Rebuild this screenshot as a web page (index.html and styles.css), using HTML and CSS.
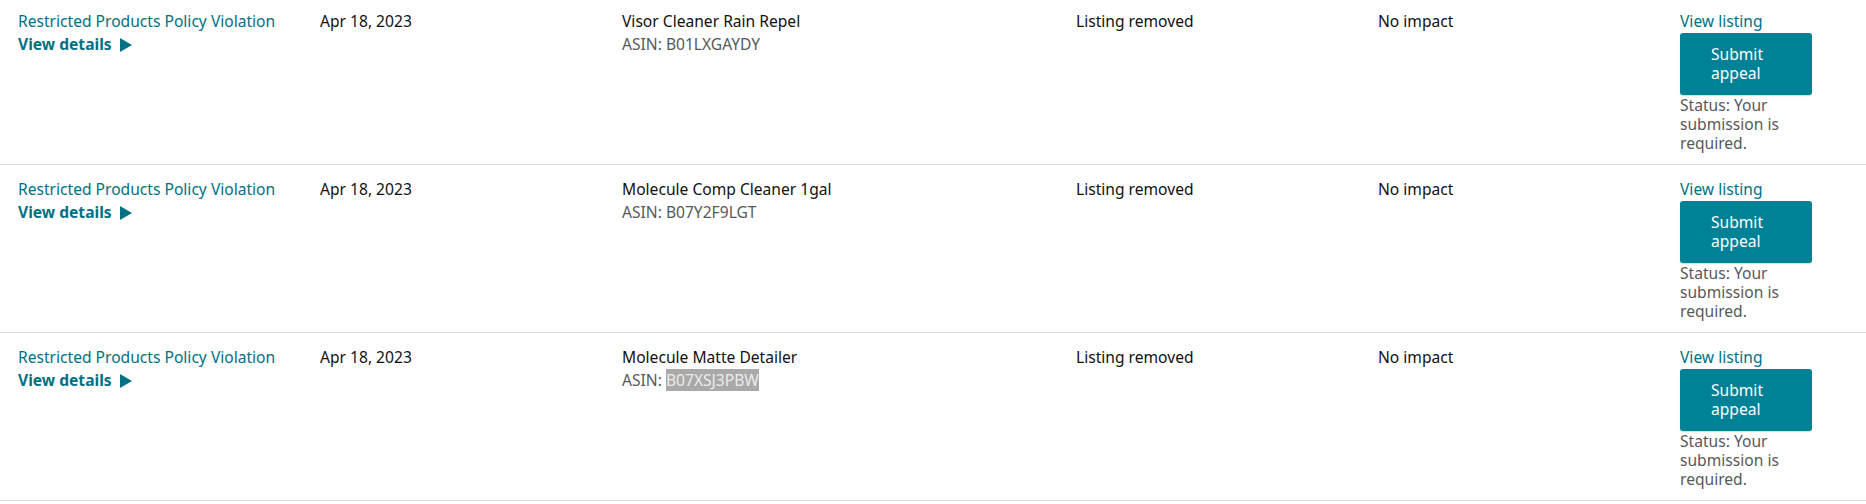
FILE: index.html
```html
<!DOCTYPE html>
<html lang="en">
<head>
<meta charset="utf-8">
<title>Account health</title>
<link rel="stylesheet" href="styles.css">
</head>
<body>
<div class="table">
  <div class="row">
    <div class="cell">
      <a class="link" href="#">Restricted Products Policy Violation</a>
      <a class="details" href="#">View details <span class="tri"></span></a>
    </div>
    <div class="cell">Apr 18, 2023</div>
    <div class="cell">
      <div class="title">Visor Cleaner Rain Repel</div>
      <div class="asin">ASIN: B01LXGAYDY</div>
    </div>
    <div class="cell">Listing removed</div>
    <div class="cell">No impact</div>
    <div class="cell actions">
      <a class="link" href="#">View listing</a>
      <button class="btn">Submit appeal</button>
      <div class="status">Status: Your submission is required.</div>
    </div>
  </div>
  <div class="row">
    <div class="cell">
      <a class="link" href="#">Restricted Products Policy Violation</a>
      <a class="details" href="#">View details <span class="tri"></span></a>
    </div>
    <div class="cell">Apr 18, 2023</div>
    <div class="cell">
      <div class="title">Molecule Comp Cleaner 1gal</div>
      <div class="asin">ASIN: B07Y2F9LGT</div>
    </div>
    <div class="cell">Listing removed</div>
    <div class="cell">No impact</div>
    <div class="cell actions">
      <a class="link" href="#">View listing</a>
      <button class="btn">Submit appeal</button>
      <div class="status">Status: Your submission is required.</div>
    </div>
  </div>
  <div class="row">
    <div class="cell">
      <a class="link" href="#">Restricted Products Policy Violation</a>
      <a class="details" href="#">View details <span class="tri"></span></a>
    </div>
    <div class="cell">Apr 18, 2023</div>
    <div class="cell">
      <div class="title">Molecule Matte Detailer</div>
      <div class="asin">ASIN: <span class="sel">B07XSJ3PBW</span></div>
    </div>
    <div class="cell">Listing removed</div>
    <div class="cell">No impact</div>
    <div class="cell actions">
      <a class="link" href="#">View listing</a>
      <button class="btn">Submit appeal</button>
      <div class="status">Status: Your submission is required.</div>
    </div>
  </div>
</div>
</body>
</html>
```

FILE: styles.css
```css
html, body {
  margin: 0;
  padding: 0;
  background: #ffffff;
}
body {
  font-family: "Noto Sans", "Open Sans", sans-serif;
  font-size: 15.6px;
  line-height: 20px;
  color: #0f1111;
}
.table {
  margin-top: -3px;
}
.row {
  display: grid;
  grid-template-columns: 302px 302px 454px 302px 302px 1fr;
  border-bottom: 1px solid #dddddd;
  padding: 14px 0 11px;
}
.cell {
  padding-left: 18px;
  display: flex;
  flex-direction: column;
  align-items: flex-start;
}
.link {
  color: #007185;
  text-decoration: none;
}
.details {
  color: #007185;
  font-weight: 700;
  text-decoration: none;
  margin-top: 3px;
  display: flex;
  align-items: center;
  gap: 8px;
}
.tri {
  width: 0;
  height: 0;
  margin-top: 2px;
  border-top: 7px solid transparent;
  border-bottom: 7px solid transparent;
  border-left: 12px solid #007185;
}
.asin {
  color: #565959;
  margin-top: 3px;
}
.sel {
  background: #a9a9a9;
  color: #ececec;
}
.actions .link {
  margin-bottom: 2px;
}
.btn {
  width: 132px;
  height: 62px;
  border: 0;
  border-radius: 3px;
  background: #008296;
  color: #ffffff;
  font-family: inherit;
  font-size: 15.6px;
  line-height: 19px;
  text-align: left;
  padding: 0 31px;
  box-shadow: 0 1px 1px rgba(0, 0, 0, 0.15);
}
.status {
  color: #565959;
  width: 120px;
  line-height: 19px;
  margin-top: 1px;
}
```
